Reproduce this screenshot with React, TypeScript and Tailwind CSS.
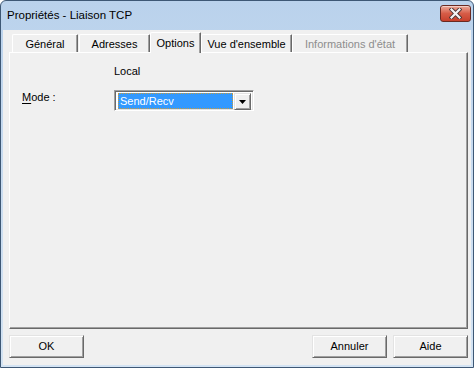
import React from "react";

const raised =
  "border border-t-[#e3e3e3] border-l-[#e3e3e3] border-r-[#696969] border-b-[#696969] shadow-[inset_1px_1px_0_#ffffff,inset_-1px_-1px_0_#a0a0a0]";

function Tab({
  label,
  width,
  selected,
  disabled,
  className = "",
}: {
  label: string;
  width: string;
  selected?: boolean;
  disabled?: boolean;
  className?: string;
}) {
  if (selected) {
    return (
      <div
        className={`${width} h-[21px] flex items-center justify-center bg-[#f0f0f0] border-l border-t border-white border-r border-r-[#696969] shadow-[inset_-1px_0_0_#a0a0a0] rounded-tl-[2px] rounded-tr-[1px] text-black ${className}`}
      >
        {label}
      </div>
    );
  }
  return (
    <div
      className={`${width} h-[18px] mb-[1px] flex items-center justify-center pt-[2px] bg-[#f0f0f0] border-l border-t border-white border-r border-r-[#696969] shadow-[inset_-1px_0_0_#a0a0a0] rounded-tl-[2px] rounded-tr-[1px] ${
        disabled ? "text-[#8d8d8d]" : "text-black"
      } ${className}`}
    >
      {label}
    </div>
  );
}

function Button({ label }: { label: string }) {
  return (
    <div
      className={`w-[75px] h-[23px] flex items-center justify-center bg-[#f0f0f0] text-black ${raised}`}
    >
      {label}
    </div>
  );
}

export default function App() {
  return (
    <div className="w-[476px] h-[368px] bg-white font-['Liberation_Sans',Arial,sans-serif] text-[11px] leading-[13px] overflow-hidden">
      <div className="w-[474px] h-[368px] flex flex-col rounded-t-[6px] border border-[#3e5875] bg-gradient-to-b from-[#bad2ec] via-[#c9dcf0] to-[#d3e3f3]">
        {/* Title bar */}
        <div className="h-[29px] flex items-start justify-between pl-[6px] pr-[2px] shrink-0">
          <span className="mt-[7px] text-[11.5px] leading-[14px] text-black">
            Propriétés - Liaison TCP
          </span>
          <div className="mt-[4px] w-[31px] h-[17px] rounded-[3px] border border-[#6a2a22] bg-gradient-to-b from-[#eaa899] via-[#d65c47] to-[#c7402c] shadow-[inset_0_1px_0_#f3cfc6] flex items-center justify-center">
            <svg width="13" height="11" viewBox="0 0 13 11">
              <path
                d="M2.5 1.5 L10.5 9.5 M10.5 1.5 L2.5 9.5"
                stroke="#4a3535"
                strokeWidth="4"
                strokeLinecap="square"
              />
              <path
                d="M2.5 1.5 L10.5 9.5 M10.5 1.5 L2.5 9.5"
                stroke="#f4f4f4"
                strokeWidth="2.2"
                strokeLinecap="square"
              />
            </svg>
          </div>
        </div>

        {/* Client area */}
        <div className="flex-1 mx-[2px] mb-[2px] bg-[#f0f0f0] flex flex-col">
          {/* Tabs */}
          <div className="relative z-10 flex items-end h-[21px] mt-[2px] -mb-px ml-[9px]">
            <Tab label="Général" width="w-[66px]" />
            <Tab label="Adresses" width="w-[71px]" className="ml-[1px]" />
            <Tab label="Options" width="w-[51px]" selected />
            <Tab label="Vue d'ensemble" width="w-[91px]" />
            <Tab label="Informations d'état" width="w-[116px]" disabled />
          </div>

          {/* Tab panel */}
          <div className="h-[277px] ml-[6px] mr-[3px] border-t border-l border-white border-r border-b border-r-[#696969] border-b-[#696969] shadow-[inset_-1px_-1px_0_#a0a0a0] pt-[12px] pl-[12px]">
            <div className="pl-[92px] text-black">Local</div>
            <div className="flex mt-[12px]">
              <div className="w-[92px] pt-[1px] text-black">
                <span className="underline underline-offset-[2px]">M</span>ode :
              </div>
              <div className="w-[140px] h-[21px] bg-white border border-t-[#a0a0a0] border-l-[#a0a0a0] border-r-white border-b-white shadow-[inset_1px_1px_0_#696969,inset_-1px_-1px_0_#e3e3e3] p-[2px] flex">
                <div className="flex-1 ml-[1px] h-[16px] bg-[#3399ff] border border-dotted border-[#c89a3c] text-white pl-[1px] leading-[14px]">
                  Send/Recv
                </div>
                <div
                  className={`ml-[1px] w-[17px] h-[17px] bg-[#f0f0f0] flex items-center justify-center ${raised}`}
                >
                  <svg width="7" height="4" viewBox="0 0 7 4">
                    <path d="M0 0 H7 L3.5 4 Z" fill="#000" />
                  </svg>
                </div>
              </div>
            </div>
          </div>

          {/* Buttons */}
          <div className="flex items-center mt-[6px] ml-[6px] mr-[3px]">
            <Button label="OK" />
            <div className="flex-1" />
            <Button label="Annuler" />
            <div className="w-[6px]" />
            <Button label="Aide" />
          </div>
        </div>
      </div>
    </div>
  );
}
